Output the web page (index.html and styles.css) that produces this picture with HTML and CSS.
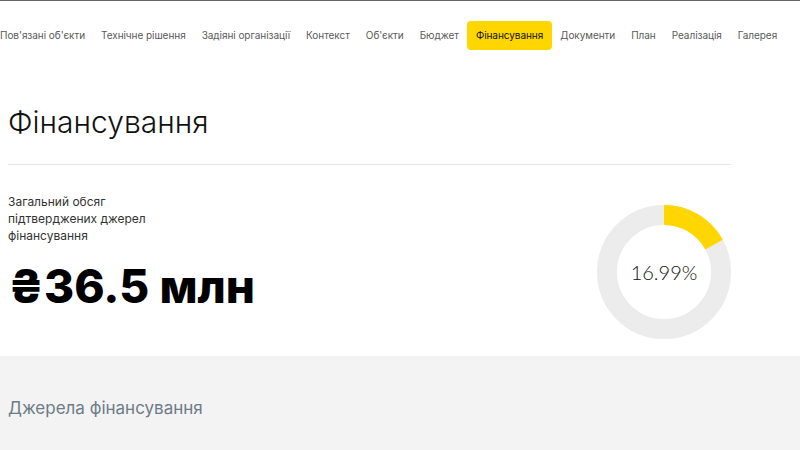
FILE: index.html
```html
<!DOCTYPE html>
<html lang="uk">
<head>
  <meta charset="UTF-8" />
  <meta name="viewport" content="width=device-width, initial-scale=1.0"/>
  <title>Фінансування</title>
  <link rel="stylesheet" href="styles.css">
</head>
<body>
  <nav class="tabs">
    <a href="#">Пов'язані об'єкти</a>
    <a href="#">Технічне рішення</a>
    <a href="#">Задіяні організації</a>
    <a href="#">Контекст</a>
    <a href="#">Об'єкти</a>
    <a href="#">Бюджет</a>
    <a href="#" class="active">Фінансування</a>
    <a href="#">Документи</a>
    <a href="#">План</a>
    <a href="#">Реалізація</a>
    <a href="#">Галерея</a>
  </nav>

  <main class="summary">
    <h1>Фінансування</h1>
    <hr>
    <div class="stats">
      <div class="total">
        <p class="label">Загальний обсяг<br>підтверджених джерел<br>фінансування</p>
        <div class="amount">₴36.5 млн</div>
      </div>
      <div class="donut">
        <svg width="134" height="134" viewBox="0 0 134 134">
          <circle cx="67" cy="67" r="57" fill="none" stroke="#ececec" stroke-width="20"/>
          <circle cx="67" cy="67" r="57" fill="none" stroke="#ffd600" stroke-width="20"
                  stroke-dasharray="60.85 358.14" transform="rotate(-90 67 67)"/>
        </svg>
        <span class="percent">16.99%</span>
      </div>
    </div>
  </main>

  <section class="sources">
    <h2>Джерела фінансування</h2>
  </section>
</body>
</html>
```

FILE: styles.css
```css
html, body {
  overflow: hidden;
}

body {
  margin: 0;
  border-top: 1px solid #666;
  font-family: Inter, "Noto Sans", sans-serif;
  color: #111;
  background-color: #fff;
}

.tabs {
  display: flex;
  margin: 20px 0 0 -8px;
  white-space: nowrap;
}

.tabs a {
  padding: 0 8px;
  line-height: 29px;
  font-size: 10px;
  letter-spacing: -0.05px;
  color: #5a5a5a;
  text-decoration: none;
  border-radius: 4px;
}

.tabs a.active {
  padding: 0 9px;
  background-color: #ffd600;
  color: #111;
}

.summary {
  width: 723px;
  padding: 0 8px 17px;
}

h1 {
  margin: 54px 0 0;
  font-size: 30px;
  line-height: 36px;
  font-weight: 300;
  color: #111;
}

hr {
  margin: 24px 0 0;
  border: 0;
  border-top: 1px solid #e6e6e6;
}

.stats {
  display: flex;
  justify-content: space-between;
  align-items: flex-start;
}

.label {
  margin: 28px 0 0;
  font-size: 12px;
  line-height: 17px;
  color: #333;
}

.amount {
  margin-top: 19px;
  font-size: 46px;
  line-height: 46px;
  font-weight: 800;
  color: #000;
}

.donut {
  position: relative;
  margin-top: 40px;
  width: 134px;
  height: 134px;
}

.donut svg {
  display: block;
}

.percent {
  position: absolute;
  inset: 0;
  display: flex;
  align-items: center;
  justify-content: center;
  font-family: Lato, sans-serif;
  font-weight: 300;
  font-size: 20px;
  color: #111;
}

.sources {
  background-color: #f3f3f3;
  padding: 40px 8px 30px;
}

h2 {
  margin: 0;
  font-size: 17px;
  line-height: 24px;
  font-weight: 400;
  color: #6d7c87;
}
```
